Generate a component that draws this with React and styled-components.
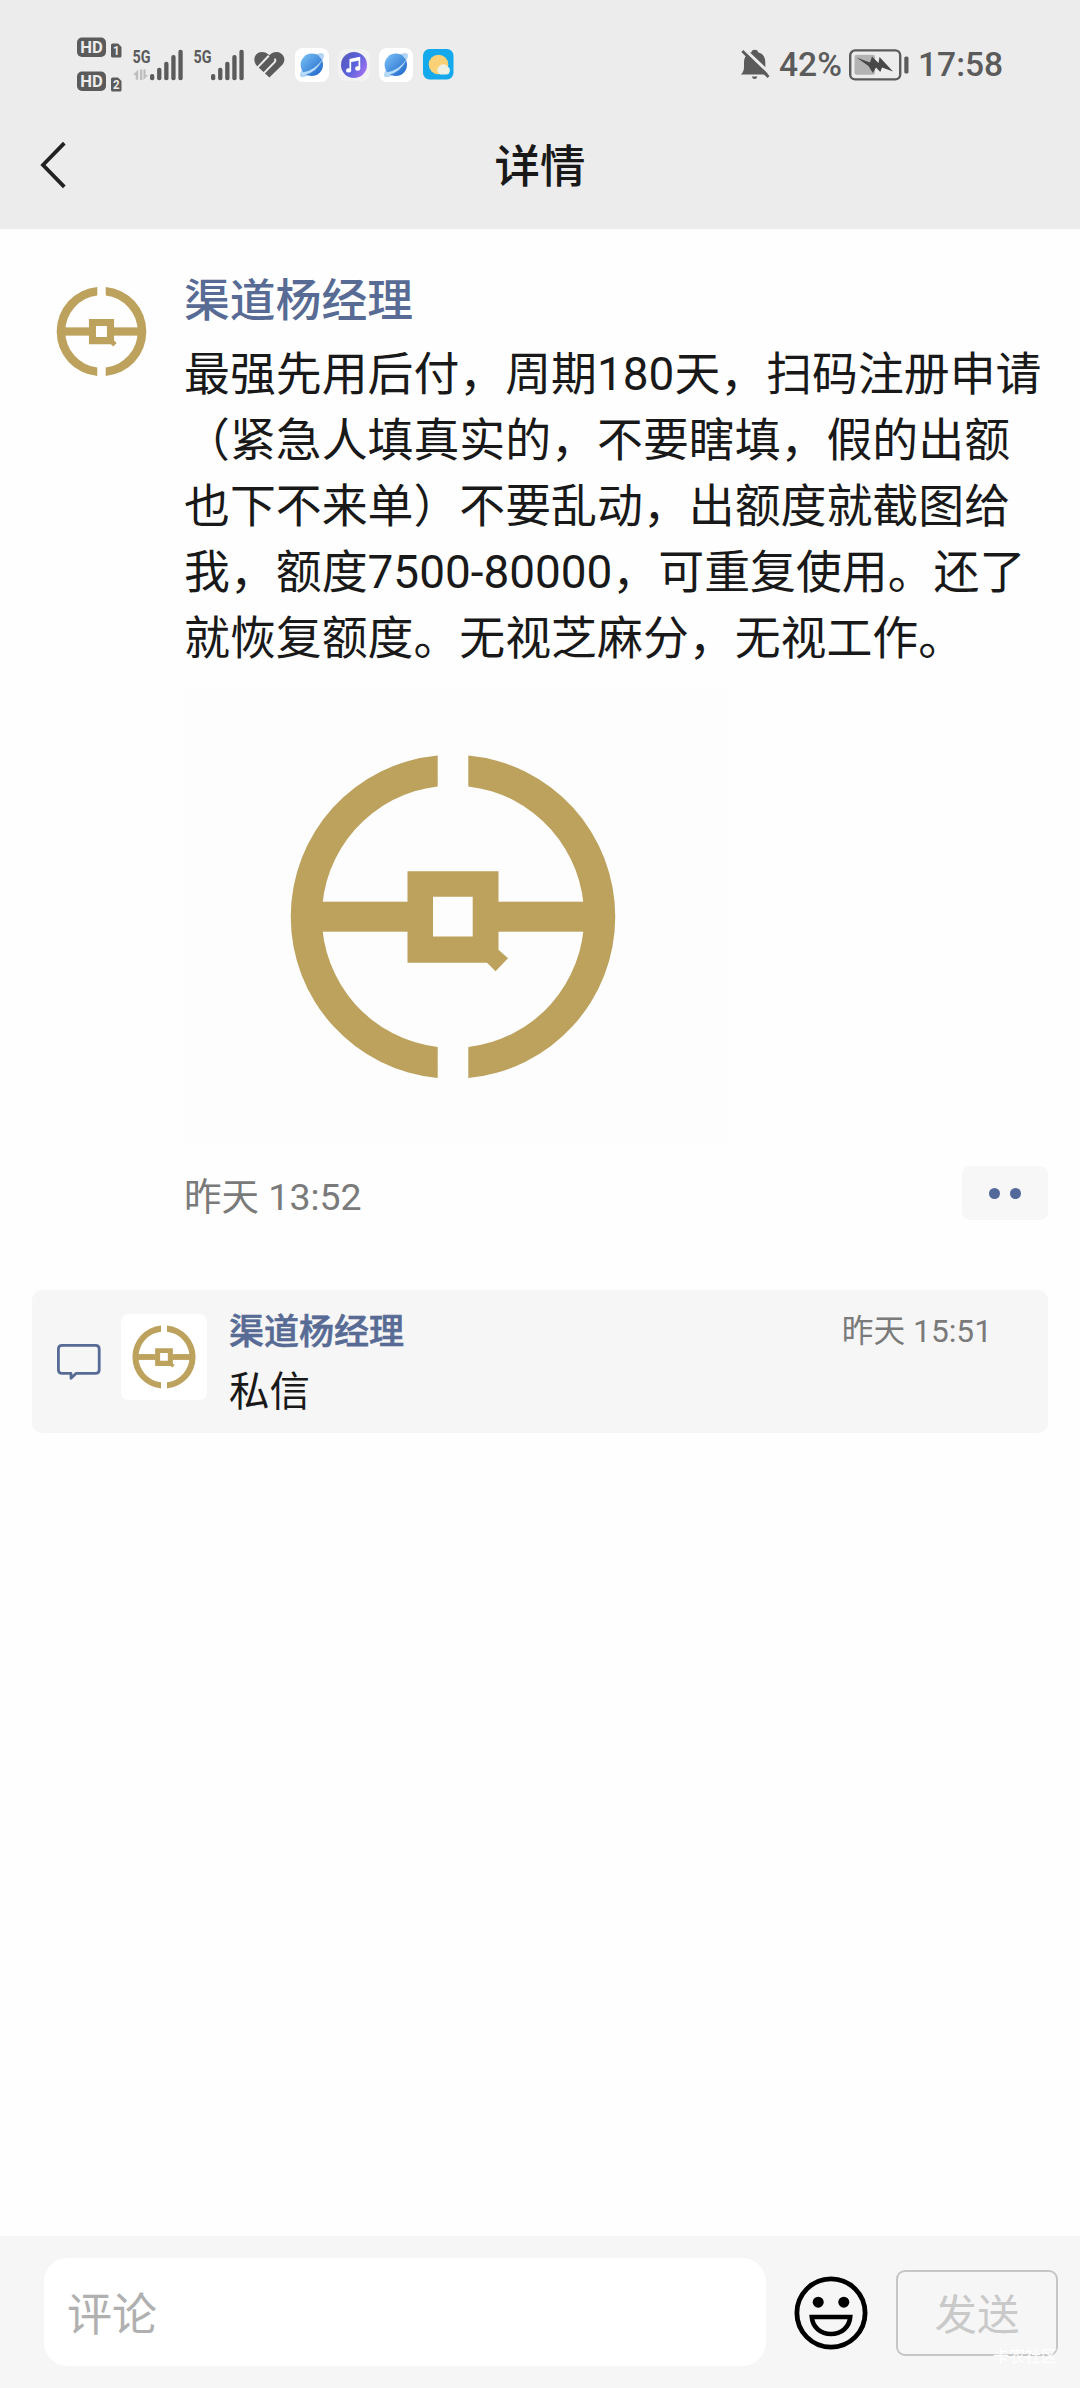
import React from 'react'
import styled, { createGlobalStyle } from 'styled-components'

const GlobalStyle = createGlobalStyle`
  * {
    margin: 0;
    padding: 0;
    box-sizing: border-box;
  }
  body {
    background-color: #fefefe;
    font-family: Roboto, "Noto Sans CJK SC", sans-serif;
    color: #191919;
  }
  svg {
    display: block;
    flex-shrink: 0;
  }
`

const gray = '#5b5b5b'
const gold = '#bda25e'
const blue = '#576b95'

const post = {
  name: '渠道杨经理',
  text: '最强先用后付，周期180天，扫码注册申请（紧急人填真实的，不要瞎填，假的出额也下不来单）不要乱动，出额度就截图给我，额度7500-80000，可重复使用。还了就恢复额度。无视芝麻分，无视工作。',
  time: '昨天 13:52',
}

const comments = [{ name: '渠道杨经理', text: '私信', time: '昨天 15:51' }]

/* gold coin logo, radius 162 around 0,0 */
const Logo = ({ width, height, viewBox }) => (
  <svg width={width} height={height} viewBox={viewBox}>
    <g fill={gold}>
      <path d="M-15.3 -161.3 A162 162 0 0 0 -15.3 161.3 V130.3 A131.2 131.2 0 0 1 -15.3 -130.3 Z" />
      <path d="M15.3 -161.3 A162 162 0 0 1 15.3 161.3 V130.3 A131.2 131.2 0 0 0 15.3 -130.3 Z" />
      <rect x="-135" y="-15" width="92" height="30" />
      <rect x="43" y="-15" width="92" height="30" />
      <path fillRule="evenodd" d="M-45.5 -45.5 H45.5 V33 L55 41.5 L42.5 54.5 L34 46 H-45.5 Z M-20 -20 V19.8 H19.7 V-20 Z" />
    </g>
  </svg>
)

const HdBadge = ({ num }) => (
  <svg width="45" height="21" viewBox="0 0 45 21">
    <rect x="0" y="0.5" width="29" height="19.5" rx="5" fill={gray} />
    <text x="3.2" y="16.3" fontSize="16.5" fontWeight="700" fill="#ececec" textLength="22.6" lengthAdjust="spacingAndGlyphs">HD</text>
    <path d="M34 8 Q34 6.5 35.5 6.5 H41 L44.5 10 V19 Q44.5 20.5 43 20.5 H35.5 Q34 20.5 34 19 Z" fill={gray} />
    <text x="36" y="18.2" fontSize="12.5" fontWeight="700" fill="#ececec" textLength="6.6" lengthAdjust="spacingAndGlyphs">{num}</text>
  </svg>
)

const bars = [73, 66.7, 60.7, 54, 48.7]

const Signal = ({ data }) => (
  <svg width="52" height="44" viewBox="-2 42 52 44">
    <text x="-0.4" y="61.8" fontSize="18.5" fontWeight="700" fill={gray} textLength="18" lengthAdjust="spacingAndGlyphs">5G</text>
    {bars.map((top, i) => (
      <rect key={top} x={17 + i * 7.1} y={top} width="4.3" height={79.3 - top} rx="2" fill={gray} />
    ))}
    {data && (
      <g fill="#bdbdbd">
        <path d="M0 74 L5.2 68.5 V78.8 H2.7 V74 Z" />
        <path d="M7 68.5 H9.3 V79 H7 Z M10.4 68.5 V79 L15 74 H12.6 V68.5 Z" />
      </g>
    )}
  </svg>
)

const HeartIcon = () => (
  <svg width="32" height="28" viewBox="0 0 32 28">
    <path d="M15.4 26.4 L3 15 C-0.8 11 -0.4 4.8 3.6 2.2 C7.6 -0.2 12 0.8 15.4 4.2 C18.8 0.8 23.4 0 27 2.4 C31.4 5.6 31.4 10.6 27.6 14.6 Z" fill={gray} />
    <path d="M3.4 16.6 L14.8 4.8" stroke="#ececec" strokeWidth="2" />
    <path d="M9.4 22.6 L20.6 11.2 Q22.2 9 20.4 7.8" fill="none" stroke="#ececec" strokeWidth="2" />
  </svg>
)

const BrowserIcon = () => (
  <svg width="34" height="34" viewBox="0 0 34 34">
    <defs>
      <linearGradient id="globe" x1="0" y1="0" x2="1" y2="1">
        <stop offset="0" stopColor="#7cc4f8" />
        <stop offset="1" stopColor="#1c62c8" />
      </linearGradient>
    </defs>
    <rect width="34" height="34" rx="8" fill="#fff" />
    <path d="M5.3 28.5 Q4.2 25.5 8 20 L13 27.5 Q7.8 30.5 5.3 28.5 Z M28.2 5.6 Q30.5 8 26.5 14 L20.5 6.5 Q26 3.8 28.2 5.6 Z" fill="#b4d4f5" />
    <circle cx="16.8" cy="16.8" r="11.2" fill="url(#globe)" />
    <path d="M6.2 24.8 Q20 23 28 10.5 Q22 24.5 8.2 27.5 Z" fill="#b9dcfa" />
  </svg>
)

const MusicIcon = () => (
  <svg width="34" height="34" viewBox="0 0 34 34">
    <defs>
      <linearGradient id="music" x1="0" y1="0" x2="1" y2="0.6">
        <stop offset="0" stopColor="#5457b8" />
        <stop offset="0.6" stopColor="#5b62dc" />
        <stop offset="1" stopColor="#9a70ee" />
      </linearGradient>
    </defs>
    <rect x="1" y="1" width="32" height="32" rx="8" fill="#f3f2f2" />
    <circle cx="17" cy="17" r="13" fill="url(#music)" />
    <path d="M13.3 22.5 V11.8 L22.4 9.8 V20.5" fill="none" stroke="#fff" strokeWidth="1.7" />
    <path d="M13.3 11.2 L22.4 9.2 V12.4 L13.3 14.2 Z" fill="#fff" />
    <ellipse cx="11.6" cy="22.4" rx="2.6" ry="2.2" fill="#fff" />
    <ellipse cx="20.7" cy="20.5" rx="2.6" ry="2.2" fill="#fff" />
  </svg>
)

const WeatherIcon = () => (
  <svg width="31" height="31" viewBox="0 0 31 31">
    <rect width="30.5" height="30.5" rx="6.5" fill="#14a9ec" />
    <circle cx="15.5" cy="15.5" r="9.8" fill="#fbd177" />
    <path d="M17.5 25.5 A4.5 4.5 0 0 1 16.4 17.3 A5.3 5.3 0 0 1 25 17.8 A4.2 4.2 0 0 1 23.5 25.5 Z" fill="#eef0e6" />
  </svg>
)

const BellOffIcon = () => (
  <svg width="30" height="31" viewBox="0 0 30 31">
    <path d="M0 25.5 C3.6 22.5 3 18 3 13.5 C3 7.5 6.5 4.2 10.5 3.2 C10.6 0 17 0 17 3.2 C21.5 4.2 24.3 8 24.3 13 C24.3 18.5 24 22.5 27.5 25.5 Z" fill={gray} />
    <path d="M10.8 27.5 H16.4 Q15.8 30 13.6 30 Q11.4 30 10.8 27.5 Z" fill={gray} />
    <path d="M3.5 0.5 L30.5 26" stroke="#ececec" strokeWidth="3" />
    <path d="M1.3 2 L27.5 28" stroke={gray} strokeWidth="2.8" />
  </svg>
)

const BatteryIcon = () => (
  <svg width="60" height="32" viewBox="0 0 60 32">
    <rect x="1.2" y="1.4" width="50" height="29" rx="5" fill="none" stroke={gray} strokeWidth="2.4" />
    <rect x="5.5" y="5.8" width="20.5" height="20" rx="2" fill="#b3b3b3" />
    <path d="M7.5 8.5 L21 13.5 L23 7.5 L29.5 14 L30.5 8 L44 22.5 L33 18.5 L31.3 23 L27 18.5 L23.8 24 L19.5 17 Z" fill="#484848" />
    <rect x="55.3" y="7.5" width="4.2" height="17" rx="1.6" fill={gray} />
  </svg>
)

const BackIcon = () => (
  <svg width="28" height="50" viewBox="0 0 28 50">
    <path d="M25.3 3.2 L4 25 L25.3 46.8" fill="none" stroke="#222" strokeWidth="3.8" />
  </svg>
)

const BubbleIcon = () => (
  <svg width="44" height="38" viewBox="0 0 44 38">
    <path d="M5 1.4 H38.5 Q42.2 1.4 42.2 5 V26 Q42.2 29.4 38.5 29.4 H19 L14 34.3 V29.4 H5 Q1.4 29.4 1.4 26 V5 Q1.4 1.4 5 1.4 Z" fill="none" stroke={blue} strokeWidth="2.8" strokeLinejoin="round" />
  </svg>
)

const SmileIcon = () => (
  <svg width="74" height="74" viewBox="-37 -37 74 74">
    <circle r="34.1" fill="none" stroke="#000" strokeWidth="4.8" />
    <circle cx="-12.8" cy="-10.8" r="5.5" />
    <circle cx="12.8" cy="-10.8" r="5.5" />
    <path d="M-19.2 4 H19.2 C18.4 14.5 10 21 0 21 C-10 21 -18.4 14.5 -19.2 4 Z" fill="none" stroke="#000" strokeWidth="4.6" />
  </svg>
)

const App = () => {
  return (
    <>
      <GlobalStyle />
      <Page>
        <Header>
          <StatusBar>
            <StatusGroup>
              <HdStack>
                <HdBadge num="1" />
                <HdBadge num="2" />
              </HdStack>
              <StatusItem $left={9}><Signal data /></StatusItem>
              <StatusItem $left={9}><Signal /></StatusItem>
              <StatusItem $left={10}><HeartIcon /></StatusItem>
              <StatusItem $left={9}><BrowserIcon /></StatusItem>
              <StatusItem $left={8}><MusicIcon /></StatusItem>
              <StatusItem $left={8}><BrowserIcon /></StatusItem>
              <StatusItem $left={10}><WeatherIcon /></StatusItem>
            </StatusGroup>
            <StatusGroup>
              <BellOffIcon />
              <StatusText $left={8} $width={70}>42%</StatusText>
              <BatteryIcon />
              <StatusText $left={9} $width={85}>17:58</StatusText>
            </StatusGroup>
          </StatusBar>
          <TitleBar>
            <BackIcon />
            <Title>详情</Title>
          </TitleBar>
        </Header>

        <Main>
          <Post>
            <Avatar $size={121}>
              <Logo width={121} height={121} viewBox="-219 -219 438 438" />
            </Avatar>
            <PostBody>
              <Name>{post.name}</Name>
              <PostText>{post.text}</PostText>
              <Photo>
                <Logo width={544} height={456} viewBox="-269 -228.7 544 456" />
              </Photo>
              <PostFooter>
                <PostTime>{post.time}</PostTime>
                <MoreButton>
                  <Dot />
                  <Dot />
                </MoreButton>
              </PostFooter>
            </PostBody>
          </Post>

          {comments.map((item) => (
            <Comment key={item.time}>
              <CommentIcon>
                <BubbleIcon />
              </CommentIcon>
              <Avatar $size={86} $filled>
                <Logo width={86} height={86} viewBox="-221 -221 442 442" />
              </Avatar>
              <CommentBody>
                <CommentTop>
                  <CommentName>{item.name}</CommentName>
                  <CommentTime>{item.time}</CommentTime>
                </CommentTop>
                <CommentText>{item.text}</CommentText>
              </CommentBody>
            </Comment>
          ))}
        </Main>

        <InputBar>
          <Input placeholder="评论" />
          <SmileIcon />
          <SendButton>
            发送
            <Mark>卡农社区</Mark>
          </SendButton>
        </InputBar>
      </Page>
    </>
  )
}

const Page = styled.div`
  width: 1080px;
  height: 2388px;
  display: flex;
  flex-direction: column;
  overflow: hidden;
`

const Header = styled.header`
  height: 229px;
  background-color: #ececec;
`

const StatusBar = styled.div`
  height: 101px;
  padding: 28px 77px 0;
  display: flex;
  justify-content: space-between;
`

const StatusGroup = styled.div`
  height: 73px;
  display: flex;
  align-items: center;
`

const HdStack = styled.div`
  display: flex;
  flex-direction: column;
  gap: 13px;
`

const StatusItem = styled.div`
  margin-left: ${({ $left }) => $left}px;
`

const StatusText = styled.span`
  width: ${({ $width }) => $width}px;
  margin-left: ${({ $left }) => $left}px;
  font-size: 33.6px;
  font-weight: 500;
  line-height: 40px;
  color: ${gray};
  white-space: nowrap;
`

const TitleBar = styled.div`
  height: 128px;
  padding: 0 39px;
  display: grid;
  grid-template-columns: 28px 1fr 28px;
  align-items: center;
`

const Title = styled.h1`
  padding-top: 5px;
  font-size: 45.5px;
  font-weight: 500;
  line-height: 66px;
  text-align: center;
`

const Main = styled.main`
  flex: 1;
  padding: 42px 32px 0;
`

const Post = styled.article`
  display: flex;
  padding-left: 9px;
  gap: 22px;
`

const Avatar = styled.div`
  width: ${({ $size }) => $size}px;
  height: ${({ $size }) => $size}px;
  flex-shrink: 0;
  border-radius: 8px;
  background-color: ${({ $filled }) => ($filled ? '#fff' : 'transparent')};
`

const PostBody = styled.div`
  flex: 1;
`

const Name = styled.h2`
  height: 70px;
  padding-top: 3px;
  font-size: 45.8px;
  font-weight: 500;
  line-height: 56px;
  color: ${blue};
`

const PostText = styled.p`
  font-size: 45.9px;
  line-height: 66px;
  text-spacing-trim: space-all;
`

const Photo = styled.figure`
  width: 544px;
  height: 456px;
  margin-top: 17px;
  background-color: #fdfdfd;
`

const PostFooter = styled.div`
  margin-top: 22px;
  height: 54px;
  display: flex;
  justify-content: space-between;
`

const PostTime = styled.time`
  padding-top: 5px;
  font-size: 37.5px;
  line-height: 52px;
  color: #7a7a7a;
`

const MoreButton = styled.button`
  width: 86px;
  height: 54px;
  display: flex;
  justify-content: center;
  align-items: center;
  gap: 10px;
  border: none;
  border-radius: 8px;
  background-color: #f7f7f7;
`

const Dot = styled.span`
  width: 11px;
  height: 11px;
  border-radius: 50%;
  background-color: #53699b;
`

const Comment = styled.section`
  height: 143px;
  margin-top: 70px;
  padding: 24px 56px 0 25px;
  display: flex;
  border-radius: 10px;
  background-color: #f6f6f6;
`

const CommentIcon = styled.div`
  width: 64px;
  padding-top: 30px;
`

const CommentBody = styled.div`
  flex: 1;
  padding-left: 22px;
`

const CommentTop = styled.div`
  height: 46px;
  margin-top: -4px;
  display: flex;
  justify-content: space-between;
`

const CommentName = styled.h3`
  font-size: 35px;
  font-weight: 500;
  line-height: 46px;
  color: ${blue};
  -webkit-text-stroke: 0.6px ${blue};
`

const CommentTime = styled.time`
  font-size: 31.7px;
  line-height: 44px;
  color: #7a7a7a;
`

const CommentText = styled.p`
  padding-top: 8px;
  font-size: 40.5px;
  line-height: 56px;
`

const InputBar = styled.footer`
  height: 152px;
  padding: 22px 22px 0 44px;
  display: grid;
  grid-template-columns: 722px 74px 162px;
  justify-content: space-between;
  align-items: center;
  align-content: start;
  background-color: #f6f6f6;

  svg {
    margin-top: 2px;
  }
`

const Input = styled.input`
  width: 722px;
  height: 108px;
  padding: 6px 23px 0;
  border: none;
  outline: none;
  border-radius: 24px;
  background-color: #fff;
  font-family: inherit;
  font-size: 45px;

  &::placeholder {
    color: #b0b0b0;
  }
`

const SendButton = styled.button`
  position: relative;
  width: 162px;
  height: 86px;
  margin-top: 2px;
  padding-top: 5px;
  border: 2px solid #c6c6c6;
  border-radius: 9px;
  background-color: transparent;
  font-family: inherit;
  font-size: 42.5px;
  line-height: 60px;
  color: #c9c9c9;
`

const Mark = styled.span`
  position: absolute;
  right: -1px;
  bottom: -14px;
  font-size: 16px;
  line-height: 22px;
  color: #fff;
`

export default App
